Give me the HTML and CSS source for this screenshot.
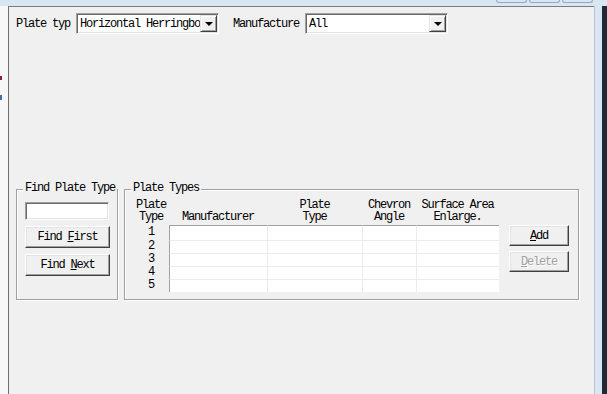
FILE: index.html
```html
<!DOCTYPE html>
<html lang="en">

<head>
    <meta charset="UTF-8">
    <title>Plate Types</title>
    <link rel="stylesheet" href="styles.css">
</head>

<body>
    <div class="screen">
        <div class="titlebar">
            <span class="cap-btn"></span>
            <span class="cap-btn"></span>
            <span class="cap-btn"></span>
        </div>
        <div class="frame">
            <div class="side-left">
                <i class="mark mark-red"></i>
                <i class="mark mark-blue"></i>
            </div>

            <div class="dialog">
                <div class="filter-row">
                    <span class="label">Plate typ</span>
                    <div class="combo">
                        <span class="combo-text">Horizontal Herringbone</span>
                        <span class="combo-btn"><i class="arrow"></i></span>
                    </div>
                    <span class="label label-manu">Manufacture</span>
                    <div class="combo">
                        <span class="combo-text">All</span>
                        <span class="combo-btn"><i class="arrow"></i></span>
                    </div>
                </div>

                <div class="groups">
                    <div class="group group-find">
                        <span class="group-title">Find Plate Type</span>
                        <input class="find-input" type="text">
                        <button class="btn btn-find">Find <u>F</u>irst</button>
                        <button class="btn btn-find">Find <u>N</u>ext</button>
                    </div>

                    <div class="group group-types">
                        <span class="group-title">Plate Types</span>
                        <div class="ptable">
                            <div class="th">Plate<br>Type</div>
                            <div class="th">Manufacturer</div>
                            <div class="th">Plate<br>Type</div>
                            <div class="th">Chevron<br>Angle</div>
                            <div class="th">Surface Area<br>Enlarge.</div>

                            <div class="side-btns">
                                <button class="btn btn-side"><u>A</u>dd</button>
                                <button class="btn btn-side" disabled><u>D</u>elete</button>
                            </div>

                            <!-- 5 empty rows -->
                            <div class="rh rh-first">1</div>
                            <div class="cell first-row first-col"></div>
                            <div class="cell first-row"></div>
                            <div class="cell first-row"></div>
                            <div class="cell first-row"></div>

                            <div class="rh">2</div>
                            <div class="cell first-col"></div>
                            <div class="cell"></div>
                            <div class="cell"></div>
                            <div class="cell"></div>

                            <div class="rh">3</div>
                            <div class="cell first-col"></div>
                            <div class="cell"></div>
                            <div class="cell"></div>
                            <div class="cell"></div>

                            <div class="rh">4</div>
                            <div class="cell first-col"></div>
                            <div class="cell"></div>
                            <div class="cell"></div>
                            <div class="cell"></div>

                            <div class="rh">5</div>
                            <div class="cell first-col"></div>
                            <div class="cell"></div>
                            <div class="cell"></div>
                            <div class="cell"></div>
                        </div>
                    </div>
                </div>
            </div>

            <div class="side-right"></div>
        </div>
    </div>
</body>

</html>
```

FILE: styles.css
```css
* {
    box-sizing: border-box;
}

body {
    margin: 0;
    background: #1f2a36;
    font-family: "Liberation Mono", "DejaVu Sans Mono", monospace;
    font-size: 12px;
    letter-spacing: -1.2px;
    color: #000;
}

.screen {
    display: flex;
    flex-direction: column;
    width: 607px;
    height: 394px;
    overflow: hidden;
}

/* window frame bits */
.titlebar {
    display: flex;
    justify-content: flex-end;
    gap: 2px;
    height: 6px;
    padding-right: 14px;
    background: #d8e5f2;
}

.cap-btn {
    width: 31px;
    height: 3px;
    border: 1px solid #97a8bc;
    border-top: none;
    border-radius: 0 0 3px 3px;
}

.frame {
    display: flex;
    flex: 1;
}

.side-left {
    display: flex;
    flex-direction: column;
    width: 9px;
    background: #f7f7f7;
    border-right: 1px solid #6f6f6f;
}

.mark {
    width: 2px;
    height: 4px;
}

.mark-red {
    margin-top: 70px;
    background: #8a2346;
}

.mark-blue {
    margin-top: 15px;
    height: 5px;
    background: #3b6fb0;
}

.side-right {
    width: 13px;
    border-left: 1px solid #b9c4d0;
    border-right: 5px solid #1f2a36;
    background: #dae6f3;
}

/* dialog */
.dialog {
    flex: 1;
    padding: 6px 7px;
    background: #f0f0f0;
    border-top: 1px solid #7b7b7b;
}

.filter-row {
    display: flex;
    align-items: center;
    height: 21px;
}

.label {
    margin-right: 6px;
    white-space: nowrap;
}

.label-manu {
    margin-left: 14px;
}

.combo {
    display: flex;
    align-items: center;
    width: 143px;
    height: 21px;
    background: #fff;
    border: 1px solid;
    border-color: #a0a0a0 #fff #fff #a0a0a0;
    box-shadow: inset 1px 1px 0 #696969, inset -1px -1px 0 #e3e3e3;
    padding: 1px 1px 1px 3px;
}

.combo-text {
    flex: 1;
    overflow: hidden;
    white-space: nowrap;
}

.combo-btn {
    display: flex;
    align-items: center;
    justify-content: center;
    flex: none;
    width: 17px;
    height: 17px;
    background: #f0f0f0;
    border: 1px solid;
    border-color: #e3e3e3 #404040 #404040 #e3e3e3;
    box-shadow: inset 1px 1px 0 #fff, inset -1px -1px 0 #a0a0a0;
}

.arrow {
    width: 0;
    height: 0;
    border-left: 4px solid transparent;
    border-right: 4px solid transparent;
    border-top: 4px solid #000;
}

/* group boxes */
.groups {
    display: flex;
    gap: 6px;
    margin-top: 155px;
}

.group {
    position: relative;
    height: 111px;
    border: 1px solid #a0a0a0;
    box-shadow: inset 1px 1px 0 #fff, 1px 1px 0 #fff;
}

.group-title {
    position: absolute;
    top: -8px;
    left: 6px;
    padding: 0 2px;
    line-height: 12px;
    white-space: nowrap;
    background: #f0f0f0;
}

.group-find {
    display: flex;
    flex-direction: column;
    align-items: flex-start;
    gap: 6px;
    width: 102px;
    padding: 12px 0 0 8px;
}

.find-input {
    width: 84px;
    height: 18px;
    margin: 0;
    background: #fff;
    border: 1px solid;
    border-color: #a0a0a0 #fff #fff #a0a0a0;
    box-shadow: inset 1px 1px 0 #696969, inset -1px -1px 0 #e3e3e3;
    outline: none;
}

.btn {
    margin: 0;
    padding: 0;
    font: inherit;
    letter-spacing: inherit;
    color: #000;
    background: #f0f0f0;
    border: 1px solid;
    border-color: #fff #404040 #404040 #fff;
    box-shadow: inset -1px -1px 0 #a0a0a0, inset 1px 1px 0 #e3e3e3;
    border-radius: 0;
}

.btn-find {
    width: 85px;
    height: 22px;
}

.btn:disabled {
    color: #a0a0a0;
    text-shadow: 1px 1px 0 #fff;
}

.group-types {
    width: 455px;
    padding: 9px 9px 0 8px;
}

/* table of plate types */
.ptable {
    display: grid;
    grid-template-columns: 36px 98px 95px 54px 83px auto;
    grid-template-rows: auto 15px 13px 13px 13px 13px;
}

.th {
    align-self: end;
    padding-bottom: 2px;
    line-height: 12px;
    text-align: center;
    white-space: nowrap;
}

.side-btns {
    grid-column: 6;
    grid-row: 2 / span 5;
    display: flex;
    flex-direction: column;
    gap: 5px;
    padding-left: 10px;
}

.btn-side {
    width: 60px;
    height: 21px;
}

.rh {
    grid-column: 1;
    line-height: 12px;
    text-align: center;
}

.rh-first {
    padding-top: 1px;
}

.cell {
    background: #fff;
    border-top: 1px solid #ebebeb;
    border-left: 1px solid #ebebeb;
}

.cell.first-row {
    border-top-color: #a0a0a0;
}

.cell.first-col {
    border-left-color: #a0a0a0;
}
```
